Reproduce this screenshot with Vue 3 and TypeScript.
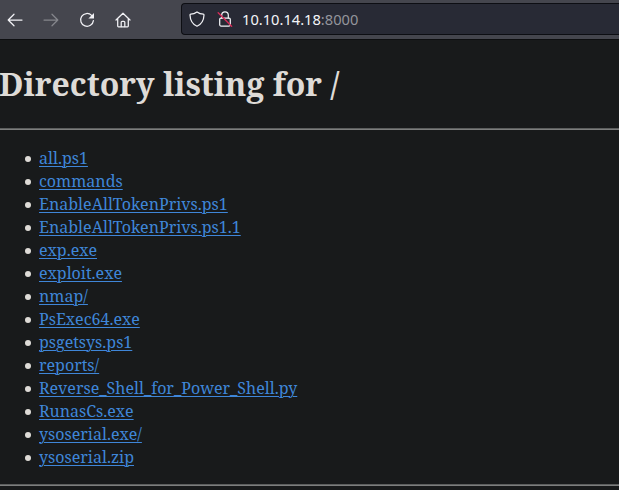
<script setup lang="ts">
interface Entry {
  name: string
}

const entries: Entry[] = [
  'all.ps1',
  'commands',
  'EnableAllTokenPrivs.ps1',
  'EnableAllTokenPrivs.ps1.1',
  'exp.exe',
  'exploit.exe',
  'nmap/',
  'PsExec64.exe',
  'psgetsys.ps1',
  'reports/',
  'Reverse_Shell_for_Power_Shell.py',
  'RunasCs.exe',
  'ysoserial.exe/',
  'ysoserial.zip',
].map((name) => ({ name }))
</script>

<template>
  <div class="window">
    <header class="toolbar">
      <nav class="buttons">
        <svg class="icon" viewBox="0 0 16 16"><path d="M15 8H1.5M7 2.2L1.2 8L7 13.8" /></svg>
        <svg class="icon disabled" viewBox="0 0 16 16"><path d="M1 8H14.5M9 2.2L14.8 8L9 13.8" /></svg>
        <svg class="icon" viewBox="0 0 16 16">
          <path d="M12.6 3.4A6.4 6.4 0 1 0 14.4 8.6" />
          <path class="solid" d="M15 .9V6.4H9.4Z" />
        </svg>
        <svg class="icon" viewBox="0 0 16 16">
          <path d="M1 8L8 1.2L15 8M2.7 6.6V14Q2.7 14.8 3.5 14.8H12.5Q13.3 14.8 13.3 14V6.6" />
          <path d="M6.2 14.6V10.3Q6.2 9.3 7.2 9.3H8.8Q9.8 9.3 9.8 10.3V14.6" />
        </svg>
      </nav>
      <div class="address">
        <svg class="icon" viewBox="0 0 16 16">
          <path d="M8 .9C6 2.3 3.8 3 1.7 3.1Q1 3.2 1 4C1.2 9.4 3.6 13.3 8 15.2C12.4 13.3 14.8 9.4 15 4Q15 3.2 14.3 3.1C12.2 3 10 2.3 8 .9Z" />
        </svg>
        <svg class="icon lock" viewBox="0 0 16 16">
          <path d="M4.7 7V4.1A3.3 3.3 0 0 1 11.3 4.1V7" />
          <rect x="2.7" y="7" width="10.6" height="8" rx="1.2" />
          <path class="strike" d="M1.2 1.8L14.6 15.2" />
        </svg>
        <span class="url">10.10.14.18<span class="port">:8000</span></span>
      </div>
    </header>
    <main class="page">
      <h1>Directory listing for /</h1>
      <hr>
      <ul>
        <li v-for="entry in entries" :key="entry.name"><a href="#">{{ entry.name }}</a></li>
      </ul>
      <hr>
    </main>
  </div>
</template>

<style>
body {
  margin: 0;
  background: #181a1b;
  overflow: hidden;
}
</style>

<style scoped>
.window {
  height: 490px;
  overflow: hidden;
  background: #181a1b;
}
.toolbar {
  box-sizing: border-box;
  height: 40px;
  display: flex;
  padding-left: 7px;
  background: #45464e;
  border-bottom: 1px solid #0d0e10;
}
.buttons {
  display: flex;
  align-items: center;
  gap: 20px;
  width: 174px;
  flex-shrink: 0;
}
.icon {
  width: 16px;
  height: 16px;
  flex-shrink: 0;
  fill: none;
  stroke: #f2f2f6;
  stroke-width: 1.25;
  stroke-linecap: round;
  stroke-linejoin: round;
}
.disabled {
  stroke: #85868c;
}
.solid {
  fill: #f2f2f6;
  stroke: none;
}
.strike {
  stroke: #d52a58;
  stroke-width: 1.4;
}
.address {
  box-sizing: border-box;
  flex: 1;
  height: 32px;
  margin-top: 3px;
  display: flex;
  align-items: center;
  padding-left: 7px;
  background: #282a35;
  border: 1px solid #0d0e13;
  border-right: 0;
  border-radius: 4px 0 0 4px;
}
.lock {
  margin-left: 12px;
}
.url {
  margin-left: 9px;
  font: 14.67px/20px "Noto Sans", sans-serif;
  color: #f5f5f9;
}
.port {
  color: #94959c;
}
.page {
  font: 16px/23px "Noto Serif", "DejaVu Serif Condensed", "DejaVu Serif", serif;
  color: #dedbd7;
}
h1 {
  margin: 0 0 0 -1px;
  padding-top: 22px;
  height: 66px;
  font-size: 32px;
  line-height: 44px;
  white-space: nowrap;
}
hr {
  margin: 0;
  height: 2px;
  border: 0;
  background: linear-gradient(#5c5e5e 50%, #7d7e7e 50%);
}
ul {
  margin: 0;
  padding: 17px 0 15px 25px;
  list-style: none;
}
li {
  display: flex;
  align-items: center;
  gap: 8px;
}
li::before {
  content: "";
  width: 6px;
  height: 6px;
  margin-top: 1px;
  border-radius: 50%;
  background: #dedbd7;
}
a {
  color: #3f86d8;
  text-decoration: underline 1px;
  text-underline-offset: 2px;
}
</style>
